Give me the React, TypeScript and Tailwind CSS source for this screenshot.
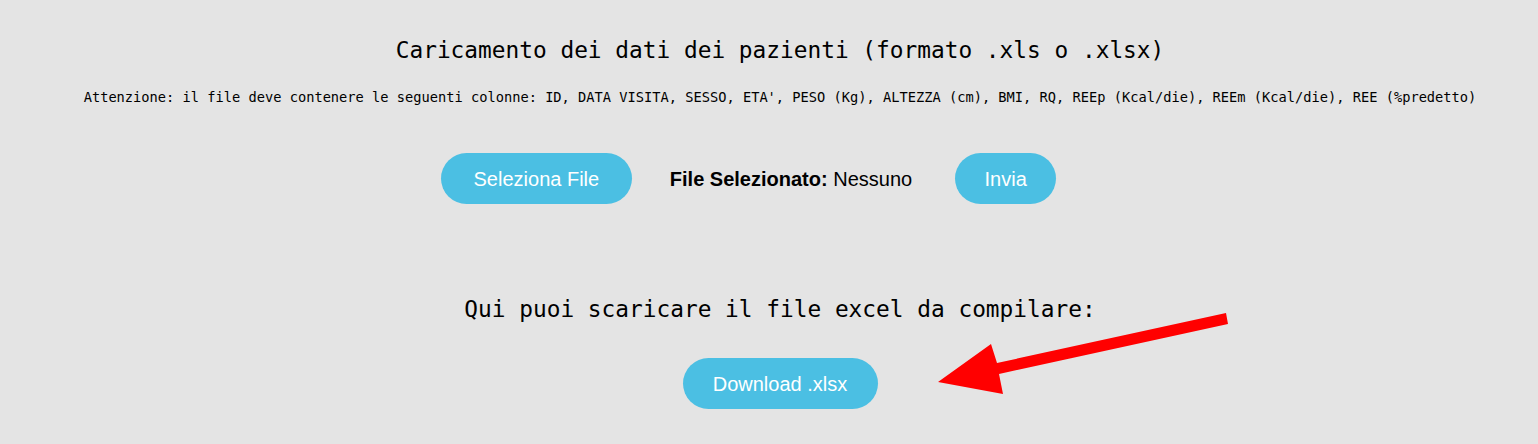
export default function App() {
  const mono = { fontFamily: '"DejaVu Sans Mono", "Liberation Mono", monospace' };
  return (
    <div className="min-h-[444px] w-full bg-[#e4e4e4] flex flex-col items-center pt-[36px] pl-[22px] text-black">
      <h1 style={mono} className="text-[22.8px] leading-[28px] font-normal">
        Caricamento dei dati dei pazienti (formato .xls o .xlsx)
      </h1>
      <p style={mono} className="mt-[24px] text-[13.7px] leading-[18px]">
        Attenzione: il file deve contenere le seguenti colonne: ID, DATA VISITA, SESSO, ETA', PESO (Kg), ALTEZZA (cm), BMI, RQ, REEp (Kcal/die), REEm (Kcal/die), REE (%predetto)
      </p>

      <div className="mt-[47px] mr-[63px] flex items-center font-['Liberation_Sans',Arial,sans-serif] text-[20px]">
        <button className="h-[51px] w-[191px] rounded-full bg-[#4bbfe3] text-white">Seleziona File</button>
        <span className="ml-[38px] mr-[43px]">
          <b>File Selezionato:</b> Nessuno
        </span>
        <button className="h-[51px] w-[101px] rounded-full bg-[#4bbfe3] text-white">Invia</button>
      </div>

      <p style={mono} className="mt-[91px] text-[22.8px] leading-[28px]">
        Qui puoi scaricare il file excel da compilare:
      </p>

      <div className="relative mt-[35px] font-['Liberation_Sans',Arial,sans-serif] text-[20px]">
        <button className="h-[51px] w-[195px] rounded-full bg-[#4bbfe3] text-white">Download .xlsx</button>
        <svg className="absolute left-[calc(100%+50px)] top-[-55px]" width="310" height="100" viewBox="0 0 310 100">
          <polygon points="10,79 63,41 69,60 298,10 300,21 71,71 75,91" fill="#ff0000" />
        </svg>
      </div>
    </div>
  );
}
